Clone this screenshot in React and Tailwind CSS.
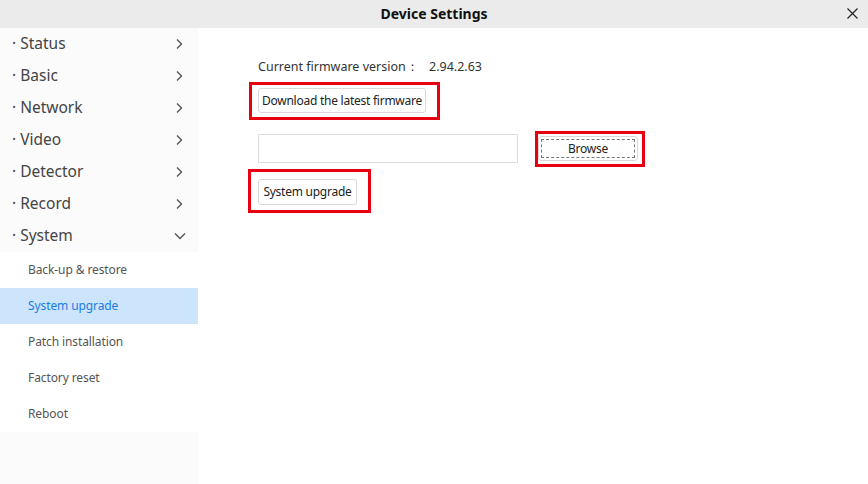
import { useState } from "react";

const MENU = ["Status", "Basic", "Network", "Video", "Detector", "Record"];
const SUB_ITEMS = ["Back-up & restore", "System upgrade", "Patch installation", "Factory reset", "Reboot"];

function ChevronRight() {
  return (
    <svg width="10" height="12" viewBox="0 0 10 12" fill="none" stroke="#555" strokeWidth="1.4">
      <path d="M3 1.5 L7.5 6 L3 10.5" />
    </svg>
  );
}

function ChevronDown() {
  return (
    <svg width="12" height="8" viewBox="0 0 12 8" fill="none" stroke="#555" strokeWidth="1.4">
      <path d="M1 1.5 L6 6.5 L11 1.5" />
    </svg>
  );
}

function Mark({ className }) {
  return <span className={"pointer-events-none absolute border-[3px] border-[#e60012] " + className} />;
}

function Btn({ children, className = "" }) {
  return (
    <button
      className={
        "block h-[25px] rounded-[3px] border border-[#d9d9d9] bg-white text-[12px] text-[#222] leading-none whitespace-nowrap tracking-[-0.25px] " +
        className
      }
    >
      {children}
    </button>
  );
}

export default function App() {
  const [active, setActive] = useState("System upgrade");

  return (
    <div
      className="w-[868px] h-[484px] flex flex-col bg-white overflow-hidden"
      style={{ fontFamily: '"Noto Sans", "Open Sans", sans-serif' }}
    >
      <div className="h-[28px] shrink-0 bg-[#ebebeb] relative flex items-center justify-center">
        <span className="text-[14px] font-bold text-[#111] pb-[1px]">Device Settings</span>
        <svg className="absolute right-[10px] top-[8px]" width="11" height="11" viewBox="0 0 11 11" stroke="#222" strokeWidth="1.2">
          <path d="M0.5 0.5 L10.5 10.5 M10.5 0.5 L0.5 10.5" />
        </svg>
      </div>

      <div className="flex flex-1 min-h-0">
        <aside className="w-[198px] shrink-0 bg-[#fbfbfb] flex flex-col">
          {MENU.map((m) => (
            <div key={m} className="h-8 flex items-center justify-between pl-[12px] pr-[14px] text-[15.5px] text-[#444]">
              <span className="pb-[1px]">· {m}</span>
              <ChevronRight />
            </div>
          ))}
          <div className="h-8 flex items-center justify-between pl-[12px] pr-[12px] text-[15.5px] text-[#444]">
            <span className="pb-[1px]">· System</span>
            <ChevronDown />
          </div>
          <div className="bg-white flex flex-col">
            {SUB_ITEMS.map((s) => (
              <div
                key={s}
                onClick={() => setActive(s)}
                className={
                  "h-9 flex items-center pl-[28px] text-[12px] tracking-[-0.1px] " +
                  (active === s ? "bg-[#cce4fc] text-[#1a7de0]" : "text-[#555]")
                }
              >
                {s}
              </div>
            ))}
          </div>
        </aside>

        <main className="flex-1 pl-[60px] pt-[30px] flex flex-col items-start text-[#333]">
          <div className="h-[18px] flex items-center text-[12.5px]">
            <span className="w-[171px]">Current firmware version：</span>
            <span>2.94.2.63</span>
          </div>

          <div className="relative mt-[12px] flex">
            <Btn className="w-[168px]">Download the latest firmware</Btn>
            <Mark className="-left-[9px] -top-[6px] -right-[14px] -bottom-[7px]" />
          </div>

          <div className="mt-[21px] flex items-center gap-5">
            <div className="w-[260px] h-[29px] border border-[#dcdcdc] bg-white" />
            <div className="relative flex">
              <Btn className="w-[100px] relative">
                Browse
                <span className="absolute inset-[2px] border border-dashed border-[#777] rounded-[1px]" />
              </Btn>
              <Mark className="-left-[3px] -top-[5px] -right-[7px] -bottom-[6px]" />
            </div>
          </div>

          <div className="relative mt-[16px] flex">
            <Btn className="w-[99px] h-[26px]">System upgrade</Btn>
            <Mark className="-left-[10px] -top-[10px] -right-[14px] -bottom-[8px]" />
          </div>
        </main>
      </div>
    </div>
  );
}
